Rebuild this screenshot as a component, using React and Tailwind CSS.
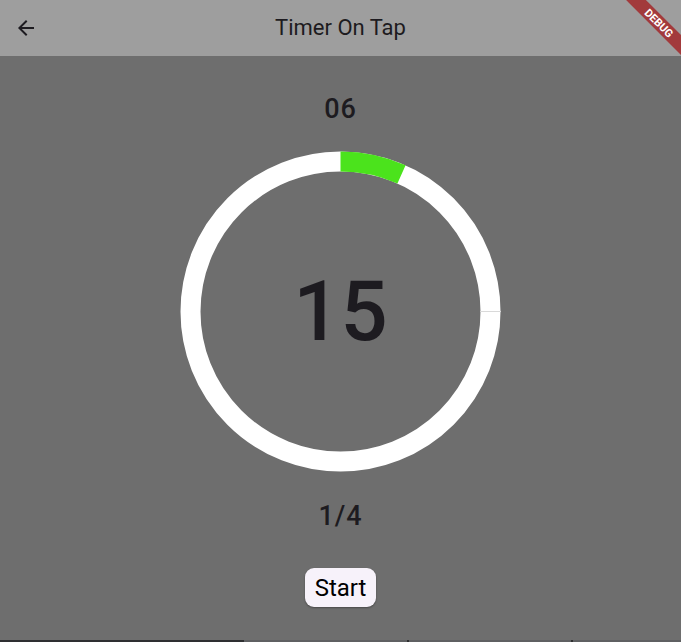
import React from 'react'

function BackArrow() {
  return (
    <svg viewBox="0 0 24 24" className="h-6 w-6" fill="#1d1b20">
      <path d="M20 11H7.83l5.59-5.59L12 4l-8 8 8 8 1.41-1.41L7.83 13H20v-2z" />
    </svg>
  )
}

function Ring({ elapsed, total }) {
  const r = 150
  const c = 2 * Math.PI * r
  const done = (elapsed / total) * c
  return (
    <div className="relative h-[321px] w-[321px]">
      <svg width="321" height="321" viewBox="0 0 321 321" className="absolute inset-0">
        <circle cx="160.5" cy="160.5" r={r} fill="none" stroke="#ffffff" strokeWidth="20" />
        <circle
          cx="160.5"
          cy="160.5"
          r={r}
          fill="none"
          stroke="#4be31c"
          strokeWidth="20"
          strokeDasharray={`${done} ${c}`}
          transform="rotate(-90 160.5 160.5)"
        />
        <line x1="300" y1="160.5" x2="321" y2="160.5" stroke="#d9d9d9" strokeWidth="1" />
      </svg>
      <div className="absolute inset-0 flex items-center justify-center">
        <span className="text-[83px] font-medium leading-none text-[#1d1b20]">15</span>
      </div>
    </div>
  )
}

export default function App() {
  return (
    <div className="relative h-[642px] w-[681px] overflow-hidden bg-[#6e6e6e] font-['Roboto',sans-serif]">
      <header className="relative flex h-14 items-center bg-[#9e9e9e]">
        <button className="ml-[14px] flex h-6 w-6 items-center justify-center">
          <BackArrow />
        </button>
        <h1 className="absolute inset-x-0 text-center text-[22px] leading-7 text-[#1d1b20]">
          Timer On Tap
        </h1>
      </header>

      <main className="flex h-[584px] flex-col items-center pt-[37px]">
        <p className="text-[27px] font-medium leading-8 tracking-[1px] text-[#1d1b20]">06</p>
        <div className="mt-[26px]">
          <Ring elapsed={1} total={15} />
        </div>
        <p className="mt-[28px] text-[27px] font-medium leading-8 tracking-[1px] text-[#1d1b20]">1/4</p>
        <button className="mt-[36px] h-[39px] rounded-[9px] bg-[#f7f2fa] px-[10px] text-[24px] leading-none text-black shadow-[0_1px_2px_rgba(0,0,0,0.35)]">
          Start
        </button>
      </main>

      <div className="flex h-[2px]">
        <div className="w-[244px] bg-[#2e2f31]" />
        <div className="flex flex-1 bg-[#5f6062]">
          <div className="w-[163px]" />
          <div className="w-[2px] bg-[#2e2f31]" />
          <div className="w-[162px]" />
          <div className="w-[2px] bg-[#2e2f31]" />
        </div>
      </div>

      <div className="absolute left-[604px] top-[16px] flex h-[14px] w-[110px] rotate-45 items-center justify-center bg-[#a23a3c]">
        <span className="text-[11px] font-bold leading-none text-white">DEBUG</span>
      </div>
    </div>
  )
}
